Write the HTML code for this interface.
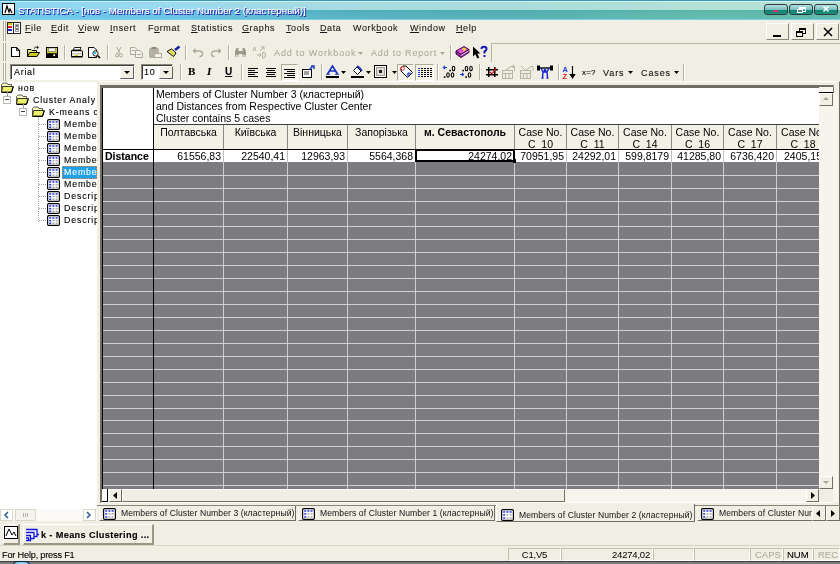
<!DOCTYPE html><html><head><meta charset="utf-8"><style>
html,body{margin:0;padding:0;width:840px;height:564px;overflow:hidden;background:#f1efe4;position:relative}
body{will-change:transform}
.a{position:absolute}
.t{position:absolute;font-family:"Liberation Sans",sans-serif;white-space:nowrap;line-height:13px;-webkit-font-smoothing:antialiased}
.m{-webkit-text-stroke:0.1px currentColor}
svg{overflow:visible}
</style></head><body>
<div class="a" style="left:0px;top:0px;width:840px;height:20px;background:linear-gradient(90deg,#6ac8ec 0%,#62c0e4 22%,#50b0c0 40%,#4eacb0 60%,#5cb8a8 85%,#58b4a8 100%)"></div>
<div class="a" style="left:0px;top:1px;width:840px;height:9px;background:linear-gradient(90deg,rgba(200,240,255,0.35) 0%,rgba(225,248,248,0.6) 40%,rgba(230,250,240,0.65) 100%)"></div>
<div class="a" style="left:0px;top:10px;width:840px;height:9px;background:linear-gradient(180deg,rgba(255,255,255,0.0),rgba(255,255,255,0.08))"></div>
<div class="a" style="left:0px;top:0px;width:840px;height:1px;background:#3a98b8"></div>
<div class="a" style="left:0px;top:1px;width:840px;height:1px;background:rgba(255,255,255,0.5)"></div>
<div class="a" style="left:0px;top:19px;width:840px;height:1px;background:#7ccfe8"></div>
<div class="a" style="left:2px;top:3px;width:13px;height:12px;background:#fff;border:1px solid #000;box-sizing:border-box"></div>
<svg class="a" style="left:2px;top:3px;" width="13" height="12" viewBox="0 0 13 12"><path d="M3 10 L5 3 L7 9 L8 6 L10 10" stroke="#000" stroke-width="1.2" fill="none"/></svg>
<div class="t m" style="left:18px;top:4px;font-size:9.8px;font-weight:400;color:#ffffff;text-shadow:1px 1px 0 #2020a8,0.5px 0.5px 0 #4040c0">STATISTICA - [нов - Members of Cluster Number 2 (кластерный)]</div>
<div class="a" style="left:764px;top:4px;width:24px;height:11px;border:1px solid #303c3c;border-radius:3px;box-sizing:border-box;background:linear-gradient(180deg,#b8e0e0 0%,#78c0c0 50%,#108070 55%,#209080 100%)"></div>
<div class="a" style="left:789px;top:4px;width:24px;height:11px;border:1px solid #303c3c;border-radius:3px;box-sizing:border-box;background:linear-gradient(180deg,#b8e0e0 0%,#78c0c0 50%,#108070 55%,#209080 100%)"></div>
<div class="a" style="left:814px;top:4px;width:24px;height:11px;border:1px solid #303c3c;border-radius:3px;box-sizing:border-box;background:linear-gradient(180deg,#b8e0e0 0%,#78c0c0 50%,#108070 55%,#209080 100%)"></div>
<div class="a" style="left:773px;top:10px;width:5px;height:2px;background:#e03060"></div>
<div class="a" style="left:799px;top:7px;width:7px;height:5px;border:1px solid #fff;border-top-width:2px;box-sizing:border-box"></div>
<div class="a" style="left:797px;top:9px;width:6px;height:4px;border:1px solid #fff;box-sizing:border-box;background:#508080"></div>
<svg class="a" style="left:823px;top:6px;" width="6" height="6" viewBox="0 0 6 6"><path d="M0.5 0.5 L5.5 5.5 M5.5 0.5 L0.5 5.5" stroke="#fff" stroke-width="1.6"/></svg>
<div class="a" style="left:0px;top:20px;width:840px;height:63px;background:#f1efe4"></div>
<div class="a" style="left:3px;top:21px;width:1px;height:20px;background:#b0ac98"></div>
<div class="a" style="left:5px;top:21px;width:1px;height:20px;background:#b0ac98"></div>
<div class="a" style="left:4px;top:21px;width:1px;height:20px;background:#fff"></div>
<div class="a" style="left:3px;top:43px;width:1px;height:18px;background:#b0ac98"></div>
<div class="a" style="left:5px;top:43px;width:1px;height:18px;background:#b0ac98"></div>
<div class="a" style="left:4px;top:43px;width:1px;height:18px;background:#fff"></div>
<div class="a" style="left:3px;top:63px;width:1px;height:18px;background:#b0ac98"></div>
<div class="a" style="left:5px;top:63px;width:1px;height:18px;background:#b0ac98"></div>
<div class="a" style="left:4px;top:63px;width:1px;height:18px;background:#fff"></div>
<div class="a" style="left:7px;top:22px;width:14px;height:12px;background:#fff;border:1px solid #222;box-sizing:border-box"></div>
<div class="a" style="left:8px;top:23px;width:4px;height:2px;background:#d0c000"></div>
<div class="a" style="left:8px;top:26px;width:4px;height:2px;background:#e02020"></div>
<div class="a" style="left:8px;top:29px;width:4px;height:2px;background:#2030d0"></div>
<div class="a" style="left:13px;top:22px;width:1px;height:12px;background:#222"></div>
<div class="a" style="left:15px;top:24px;width:4px;height:8px;border:1px solid #a0a0a0;box-sizing:border-box"></div>
<div class="a" style="left:16px;top:25px;width:2px;height:2px;background:#707070"></div>
<div class="a" style="left:16px;top:28px;width:2px;height:2px;background:#707070"></div>
<div class="t m" style="left:25px;top:22px;font-size:9px;font-weight:400;color:#1a1a1a;letter-spacing:0.6px"><u>F</u>ile</div>
<div class="t m" style="left:51px;top:22px;font-size:9px;font-weight:400;color:#1a1a1a;letter-spacing:0.6px"><u>E</u>dit</div>
<div class="t m" style="left:78px;top:22px;font-size:9px;font-weight:400;color:#1a1a1a;letter-spacing:0.6px"><u>V</u>iew</div>
<div class="t m" style="left:110px;top:22px;font-size:9px;font-weight:400;color:#1a1a1a;letter-spacing:0.6px"><u>I</u>nsert</div>
<div class="t m" style="left:148px;top:22px;font-size:9px;font-weight:400;color:#1a1a1a;letter-spacing:0.6px">F<u>o</u>rmat</div>
<div class="t m" style="left:191px;top:22px;font-size:9px;font-weight:400;color:#1a1a1a;letter-spacing:0.6px"><u>S</u>tatistics</div>
<div class="t m" style="left:242px;top:22px;font-size:9px;font-weight:400;color:#1a1a1a;letter-spacing:0.6px"><u>G</u>raphs</div>
<div class="t m" style="left:286px;top:22px;font-size:9px;font-weight:400;color:#1a1a1a;letter-spacing:0.6px"><u>T</u>ools</div>
<div class="t m" style="left:320px;top:22px;font-size:9px;font-weight:400;color:#1a1a1a;letter-spacing:0.6px"><u>D</u>ata</div>
<div class="t m" style="left:353px;top:22px;font-size:9px;font-weight:400;color:#1a1a1a;letter-spacing:0.6px">Work<u>b</u>ook</div>
<div class="t m" style="left:410px;top:22px;font-size:9px;font-weight:400;color:#1a1a1a;letter-spacing:0.6px"><u>W</u>indow</div>
<div class="t m" style="left:456px;top:22px;font-size:9px;font-weight:400;color:#1a1a1a;letter-spacing:0.6px"><u>H</u>elp</div>
<div class="a" style="left:766px;top:23px;width:23px;height:17px;background:#f1efe4;border-right:1px solid #8a8678;border-bottom:1px solid #8a8678;border-left:1px solid #fff;border-top:1px solid #fff;box-sizing:border-box"></div>
<div class="a" style="left:791px;top:23px;width:23px;height:17px;background:#f1efe4;border-right:1px solid #8a8678;border-bottom:1px solid #8a8678;border-left:1px solid #fff;border-top:1px solid #fff;box-sizing:border-box"></div>
<div class="a" style="left:816px;top:23px;width:23px;height:17px;background:#f1efe4;border-right:1px solid #8a8678;border-bottom:1px solid #8a8678;border-left:1px solid #fff;border-top:1px solid #fff;box-sizing:border-box"></div>
<div class="a" style="left:773px;top:35px;width:8px;height:2px;background:#000"></div>
<div class="a" style="left:799px;top:28px;width:7px;height:6px;border:1px solid #000;border-top-width:2px;box-sizing:border-box;background:#f1efe4"></div>
<div class="a" style="left:796px;top:31px;width:7px;height:6px;border:1px solid #000;border-top-width:2px;box-sizing:border-box;background:#f1efe4"></div>
<svg class="a" style="left:823px;top:27px;" width="10" height="10" viewBox="0 0 10 10"><path d="M1 1 L9 9 M9 1 L1 9" stroke="#000" stroke-width="1.5"/></svg>
<div class="a" style="left:491px;top:43px;width:349px;height:19px;border-left:1px solid #b8b4a0;border-top:1px solid #b8b4a0;box-sizing:border-box"></div>
<svg class="a" style="left:10px;top:47px;" width="11" height="11" viewBox="0 0 11 11"><path d="M1.5 0.5 H6.5 L9.5 3.5 V9.5 H1.5 Z" fill="#fff" stroke="#000" stroke-width="1.1"/><path d="M6.5 0.5 V3.5 H9.5" fill="none" stroke="#000" stroke-width="0.8"/></svg>
<svg class="a" style="left:26px;top:46px;" width="15" height="12" viewBox="0 0 15 12"><path d="M1.5 3.5 H5 L6 4.5 H10.5 V10.5 H1.5 Z" fill="#e8e880" stroke="#000" stroke-width="1"/><path d="M3.5 6.5 H13.5 L11 10.5 H1.5 Z" fill="#c8c820" stroke="#000" stroke-width="1"/><path d="M8 2.5 Q9.5 0.5 11.5 1" stroke="#000" fill="none" stroke-width="0.9"/><path d="M11 0 L13 1.5 L11 3 Z" fill="#000"/></svg>
<svg class="a" style="left:46px;top:47px;" width="12" height="11" viewBox="0 0 12 11"><rect x="0.5" y="0.5" width="11" height="10" fill="#d0cc30" stroke="#000" stroke-width="1"/><rect x="2.5" y="1" width="7" height="3.5" fill="#fff" stroke="#404040" stroke-width="0.5"/><rect x="1" y="6.2" width="10" height="4" fill="#000"/><rect x="7.3" y="7.3" width="1.8" height="1.8" fill="#fff"/></svg>
<div class="a" style="left:64px;top:45px;width:1px;height:15px;background:#b8b4a0"></div>
<div class="a" style="left:65px;top:45px;width:1px;height:15px;background:#fff"></div>
<svg class="a" style="left:70px;top:47px;" width="14" height="11" viewBox="0 0 14 11"><path d="M4.5 0.5 H11 L10 3 H3 Z" fill="#fff" stroke="#000" stroke-width="0.9"/><path d="M1.5 3.5 H11.5 Q12.5 3.5 12.5 5 V9.5 H1.5 Z" fill="#c8c4b8" stroke="#000" stroke-width="1"/><rect x="2" y="5" width="10" height="1" fill="#fff"/><rect x="2" y="7.5" width="10" height="1.2" fill="#fff"/><rect x="5" y="8" width="3" height="1" fill="#e0d000"/><path d="M1 10 H12.5" stroke="#000"/></svg>
<svg class="a" style="left:88px;top:47px;" width="13" height="12" viewBox="0 0 13 12"><path d="M0.5 0.5 H6 L8.5 3 V10.5 H0.5 Z" fill="#fff" stroke="#000" stroke-width="1"/><circle cx="7.5" cy="6.5" r="2.6" fill="#fff" stroke="#202020" stroke-width="1"/><circle cx="7" cy="6" r="1.2" fill="#20c8e8"/><path d="M9.5 8.5 L12 11" stroke="#000" stroke-width="1.6"/></svg>
<div class="a" style="left:107px;top:45px;width:1px;height:15px;background:#b8b4a0"></div>
<div class="a" style="left:108px;top:45px;width:1px;height:15px;background:#fff"></div>
<svg class="a" style="left:115px;top:47px;" width="8" height="11" viewBox="0 0 8 11"><path d="M1.5 0 L5 6.5 M6 0 L2.5 6.5" stroke="#aca899" stroke-width="1"/><circle cx="2" cy="8.3" r="1.6" fill="none" stroke="#aca899"/><circle cx="5.8" cy="8.3" r="1.6" fill="none" stroke="#aca899"/></svg>
<svg class="a" style="left:130px;top:47px;" width="14" height="11" viewBox="0 0 14 11"><path d="M0.5 0.5 H5 L7 2.5 V7.5 H0.5 Z" fill="#f4f2ea" stroke="#aca899"/><rect x="2" y="3" width="3" height="1" fill="#aca899"/><path d="M5.5 3.5 H10 L12.5 6 V10.5 H5.5 Z" fill="#f4f2ea" stroke="#aca899"/><rect x="7" y="7" width="4" height="1" fill="#aca899"/></svg>
<svg class="a" style="left:148px;top:47px;" width="15" height="11" viewBox="0 0 15 11"><rect x="1" y="1" width="10" height="10" rx="1.5" fill="#b4b0a2"/><rect x="3.5" y="0" width="5" height="2" fill="#8c887a"/><rect x="6.5" y="6.5" width="7" height="4" fill="#f4f2ea" stroke="#aca899"/></svg>
<svg class="a" style="left:166px;top:46px;" width="15" height="13" viewBox="0 0 15 13"><path d="M9 4 L13.5 0.5" stroke="#1828a0" stroke-width="2.6"/><path d="M1 5.5 L5.5 3 L10 7 L7.5 10.5 Z" fill="#f0f0a0" stroke="#000" stroke-width="1"/><path d="M4 5 L8 8.5" stroke="#d8d820" stroke-width="1.6"/><path d="M3 12 H4 M5 12 H6 M7 12 H8" stroke="#d8e020"/></svg>
<div class="a" style="left:185px;top:45px;width:1px;height:15px;background:#b8b4a0"></div>
<div class="a" style="left:186px;top:45px;width:1px;height:15px;background:#fff"></div>
<svg class="a" style="left:192px;top:48px;" width="12" height="9" viewBox="0 0 12 9"><path d="M2 3 H7 Q10.5 3 10.5 6 Q10.5 8.5 7.5 8.5" stroke="#aca899" fill="none" stroke-width="1.3"/><path d="M0.5 3 L3.5 0 V6 Z" fill="#aca899"/></svg>
<svg class="a" style="left:210px;top:48px;" width="12" height="9" viewBox="0 0 12 9"><path d="M10 3 H5 Q1.5 3 1.5 6 Q1.5 8.5 4.5 8.5" stroke="#aca899" fill="none" stroke-width="1.3"/><path d="M11.5 3 L8.5 0 V6 Z" fill="#aca899"/></svg>
<div class="a" style="left:228px;top:45px;width:1px;height:15px;background:#b8b4a0"></div>
<div class="a" style="left:229px;top:45px;width:1px;height:15px;background:#fff"></div>
<svg class="a" style="left:234px;top:47px;" width="13" height="11" viewBox="0 0 13 11"><path d="M1 10 V4 L2.5 1 H4.5 V10 Z M12 10 V4 L10.5 1 H8.5 V10 Z" fill="#9c988a"/><rect x="4" y="4" width="5" height="3" fill="#9c988a"/><rect x="1.5" y="8" width="2.5" height="2" fill="#d8d4c8"/><rect x="9" y="8" width="2.5" height="2" fill="#d8d4c8"/></svg>
<svg class="a" style="left:252px;top:46px;" width="14" height="13" viewBox="0 0 14 13"><path d="M1 5 L2.5 1 L4 5 M9 1 L12 1 V4 M12 1 L8 5 M5 9 H9 M7.5 7.5 L9 9 L7.5 10.5" stroke="#aca899" fill="none" stroke-width="0.9"/><path d="M10.5 6.5 H12 Q13.5 6.5 13.5 8 Q13.5 12 12 12 H10.5 Z" fill="none" stroke="#aca899" stroke-width="0.9"/></svg>
<div class="t m" style="left:274px;top:47px;font-size:9px;font-weight:400;color:#b0ac9c;letter-spacing:0.9px">Add to Workbook</div>
<svg class="a" style="left:358px;top:52px;" width="5" height="3" viewBox="0 0 5 3"><path d="M0 0 H5 L2.5 3 Z" fill="#aca899"/></svg>
<div class="t m" style="left:371px;top:47px;font-size:9px;font-weight:400;color:#b0ac9c;letter-spacing:0.8px">Add to Report</div>
<svg class="a" style="left:440px;top:52px;" width="5" height="3" viewBox="0 0 5 3"><path d="M0 0 H5 L2.5 3 Z" fill="#aca899"/></svg>
<div class="a" style="left:450px;top:45px;width:1px;height:15px;background:#b8b4a0"></div>
<div class="a" style="left:451px;top:45px;width:1px;height:15px;background:#fff"></div>
<svg class="a" style="left:455px;top:45px;" width="15" height="14" viewBox="0 0 15 14"><path d="M1 6 L9 1.5 L14 4.5 L6 9.5 Z" fill="#e050e0" stroke="#300030" stroke-width="0.9"/><path d="M1 6 V9 L6 12.5 L14 7.5 V4.5 L6 9.5 Z" fill="#a020b0" stroke="#300030" stroke-width="0.9"/><path d="M6 10.5 L13.5 6" stroke="#fff" stroke-width="0.8"/><path d="M7.5 4.5 Q8.5 3 10 3.8 Q10.5 4.5 9 5.5 L8.5 6.3" stroke="#f0f000" stroke-width="1.2" fill="none"/></svg>
<svg class="a" style="left:472px;top:46px;" width="17" height="13" viewBox="0 0 17 13"><path d="M1 0.5 V10.5 L3.3 8.3 L5.3 12.5 L7.3 11.5 L5.3 7.5 H8.5 Z" fill="#000"/><path d="M9.5 3 Q9.5 0.8 12 0.8 Q14.5 0.8 14.5 3 Q14.5 4.5 12.5 5.5 V7.5" stroke="#1818b0" stroke-width="2" fill="none"/><rect x="11.5" y="9" width="2" height="2" fill="#1818b0"/></svg>
<div class="a" style="left:10px;top:64px;width:125px;height:16px;background:#fff;border-top:1px solid #8a8678;border-left:1px solid #8a8678;border-bottom:1px solid #fff;border-right:1px solid #fff;box-sizing:border-box"></div>
<div class="a" style="left:11px;top:65px;width:1px;height:14px;background:#404040"></div>
<div class="a" style="left:11px;top:65px;width:123px;height:1px;background:#404040"></div>
<div class="t m" style="left:14px;top:66px;font-size:9px;font-weight:400;color:#000;letter-spacing:0.7px">Arial</div>
<div class="a" style="left:120px;top:66px;width:14px;height:13px;background:#f1efe4;border-right:1px solid #606060;border-bottom:1px solid #606060;border-left:1px solid #fff;border-top:1px solid #fff;box-sizing:border-box"></div>
<svg class="a" style="left:124px;top:71px;" width="6" height="3" viewBox="0 0 6 3"><path d="M0 0 H6 L3 3 Z" fill="#000"/></svg>
<div class="a" style="left:141px;top:64px;width:32px;height:16px;background:#fff;border-top:1px solid #8a8678;border-left:1px solid #8a8678;border-bottom:1px solid #fff;border-right:1px solid #fff;box-sizing:border-box"></div>
<div class="a" style="left:142px;top:65px;width:1px;height:14px;background:#404040"></div>
<div class="a" style="left:142px;top:65px;width:30px;height:1px;background:#404040"></div>
<div class="t m" style="left:144px;top:66px;font-size:9px;font-weight:400;color:#000;letter-spacing:0.7px">10</div>
<div class="a" style="left:159px;top:66px;width:14px;height:13px;background:#f1efe4;border-right:1px solid #606060;border-bottom:1px solid #606060;border-left:1px solid #fff;border-top:1px solid #fff;box-sizing:border-box"></div>
<svg class="a" style="left:163px;top:71px;" width="6" height="3" viewBox="0 0 6 3"><path d="M0 0 H6 L3 3 Z" fill="#000"/></svg>
<div class="a" style="left:180px;top:64px;width:1px;height:16px;background:#b8b4a0"></div>
<div class="a" style="left:181px;top:64px;width:1px;height:16px;background:#fff"></div>
<div class="t m" style="left:188px;top:65px;font-size:11px;font-weight:700;color:#000;font-family:'Liberation Serif'">B</div>
<div class="t m" style="left:207px;top:65px;font-size:11px;font-weight:700;color:#000;font-family:'Liberation Serif';font-style:italic">I</div>
<div class="t m" style="left:225px;top:65px;font-size:10px;font-weight:700;color:#000;"><u>U</u></div>
<div class="a" style="left:241px;top:64px;width:1px;height:16px;background:#b8b4a0"></div>
<div class="a" style="left:242px;top:64px;width:1px;height:16px;background:#fff"></div>
<div class="a" style="left:248px;top:68px;width:10px;height:1px;background:#000"></div>
<div class="a" style="left:248px;top:70px;width:7px;height:1px;background:#000"></div>
<div class="a" style="left:248px;top:72px;width:10px;height:1px;background:#000"></div>
<div class="a" style="left:248px;top:74px;width:7px;height:1px;background:#000"></div>
<div class="a" style="left:248px;top:76px;width:10px;height:1px;background:#000"></div>
<div class="a" style="left:266px;top:68px;width:10px;height:1px;background:#000"></div>
<div class="a" style="left:267px;top:70px;width:8px;height:1px;background:#000"></div>
<div class="a" style="left:266px;top:72px;width:10px;height:1px;background:#000"></div>
<div class="a" style="left:267px;top:74px;width:8px;height:1px;background:#000"></div>
<div class="a" style="left:266px;top:76px;width:10px;height:1px;background:#000"></div>
<div class="a" style="left:281px;top:64px;width:17px;height:17px;background:#f4f2e8;border-left:1px solid #b0ac98;border-top:1px solid #b0ac98;border-right:1px solid #fff;border-bottom:1px solid #fff;box-sizing:border-box"></div>
<div class="a" style="left:284px;top:69px;width:11px;height:1px;background:#000"></div>
<div class="a" style="left:287px;top:71px;width:8px;height:1px;background:#000"></div>
<div class="a" style="left:284px;top:73px;width:11px;height:1px;background:#000"></div>
<div class="a" style="left:287px;top:75px;width:8px;height:1px;background:#000"></div>
<div class="a" style="left:284px;top:77px;width:11px;height:1px;background:#000"></div>
<svg class="a" style="left:301px;top:65px;" width="14" height="14" viewBox="0 0 14 14"><rect x="1.5" y="4.5" width="9" height="8" fill="#fff" stroke="#000"/><rect x="3" y="6" width="5" height="4" fill="#a0a0a0"/><path d="M8 5 L12 1 M10 1 H13 V4" stroke="#2040c0" stroke-width="1.5" fill="none"/></svg>
<div class="a" style="left:321px;top:64px;width:1px;height:16px;background:#b8b4a0"></div>
<div class="a" style="left:322px;top:64px;width:1px;height:16px;background:#fff"></div>
<svg class="a" style="left:326px;top:65px;" width="13" height="14" viewBox="0 0 13 14"><path d="M1.5 9 L6.5 1 L11.5 9 M4 6 H9" stroke="#1030c0" stroke-width="1.6" fill="none"/><path d="M0 9.2 H4 M9 9.2 H13" stroke="#1030c0" stroke-width="1"/><rect x="0" y="11" width="13" height="2" fill="#000"/></svg>
<svg class="a" style="left:341px;top:71px;" width="5" height="3" viewBox="0 0 5 3"><path d="M0 0 H5 L2.5 3 Z" fill="#000"/></svg>
<svg class="a" style="left:351px;top:65px;" width="13" height="14" viewBox="0 0 13 14"><path d="M2.5 5.5 L6 2 L10 6 L6.5 9.5 Z" fill="#fff" stroke="#000" stroke-width="1"/><path d="M6 1 L9 3 L11 6" stroke="#1030c0" stroke-width="1.6" fill="none"/><rect x="0" y="11" width="13" height="2" fill="#000"/></svg>
<svg class="a" style="left:366px;top:71px;" width="5" height="3" viewBox="0 0 5 3"><path d="M0 0 H5 L2.5 3 Z" fill="#000"/></svg>
<svg class="a" style="left:374px;top:65px;" width="13" height="13" viewBox="0 0 13 13"><rect x="0.5" y="0.5" width="12" height="12" fill="#fff" stroke="#000"/><rect x="2.5" y="2.5" width="8" height="8" fill="#dcdad0" stroke="#a0a098" stroke-width="1"/><rect x="5" y="5" width="3" height="3" fill="#202020"/></svg>
<svg class="a" style="left:392px;top:71px;" width="5" height="3" viewBox="0 0 5 3"><path d="M0 0 H5 L2.5 3 Z" fill="#000"/></svg>
<div class="a" style="left:397px;top:64px;width:17px;height:17px;background:#f4f2e8;border-left:1px solid #b0ac98;border-top:1px solid #b0ac98;border-right:1px solid #fff;border-bottom:1px solid #fff;box-sizing:border-box"></div>
<svg class="a" style="left:399px;top:65px;" width="15" height="14" viewBox="0 0 15 14"><path d="M1.5 3.5 L4 1 H7 L13.5 7.5 L8.5 12.5 L2 6 V3.5 Z" fill="#fff" stroke="#000" stroke-width="1"/><path d="M9.5 7 L12.5 8 L8.5 12 L7.5 9 Z" fill="#5070e0"/><circle cx="3.5" cy="3.5" r="1.8" fill="none" stroke="#e02020" stroke-width="1"/></svg>
<div class="a" style="left:415px;top:64px;width:19px;height:17px;background:#f4f2e8;border-left:1px solid #b0ac98;border-top:1px solid #b0ac98;border-right:1px solid #fff;border-bottom:1px solid #fff;box-sizing:border-box"></div>
<svg class="a" style="left:418px;top:67px;" width="14" height="12" viewBox="0 0 14 12"><rect x="0" y="1" width="2" height="1" fill="#2040e0"/><rect x="3" y="1" width="2" height="1" fill="#000"/><rect x="6" y="1" width="2" height="1" fill="#000"/><rect x="9" y="1" width="2" height="1" fill="#000"/><rect x="12" y="1" width="2" height="1" fill="#000"/><rect x="0" y="3" width="2" height="1" fill="#2040e0"/><rect x="3" y="3" width="2" height="1" fill="#000"/><rect x="6" y="3" width="2" height="1" fill="#000"/><rect x="9" y="3" width="2" height="1" fill="#000"/><rect x="12" y="3" width="2" height="1" fill="#000"/><rect x="0" y="5" width="2" height="1" fill="#2040e0"/><rect x="3" y="5" width="2" height="1" fill="#000"/><rect x="6" y="5" width="2" height="1" fill="#000"/><rect x="9" y="5" width="2" height="1" fill="#000"/><rect x="12" y="5" width="2" height="1" fill="#000"/><rect x="0" y="7" width="2" height="1" fill="#2040e0"/><rect x="3" y="7" width="2" height="1" fill="#000"/><rect x="6" y="7" width="2" height="1" fill="#000"/><rect x="9" y="7" width="2" height="1" fill="#000"/><rect x="12" y="7" width="2" height="1" fill="#000"/><rect x="0" y="9" width="2" height="1" fill="#2040e0"/><rect x="3" y="9" width="2" height="1" fill="#000"/><rect x="6" y="9" width="2" height="1" fill="#000"/><rect x="9" y="9" width="2" height="1" fill="#000"/><rect x="12" y="9" width="2" height="1" fill="#000"/></svg>
<div class="a" style="left:437px;top:64px;width:1px;height:16px;background:#b8b4a0"></div>
<div class="a" style="left:438px;top:64px;width:1px;height:16px;background:#fff"></div>
<svg class="a" style="left:443px;top:65px;" width="14" height="14" viewBox="0 0 14 14"><path d="M0.5 2.5 H4 M2 1 L0.5 2.5 L2 4" stroke="#2040d0" stroke-width="1.2" fill="none"/><rect x="6.3" y="4.8" width="1.6" height="1.6" fill="#000"/><ellipse cx="10.5" cy="3.5" rx="1.3" ry="2.2" fill="none" stroke="#000" stroke-width="1.1"/><rect x="0.8" y="11.3" width="1.6" height="1.6" fill="#000"/><ellipse cx="5" cy="10" rx="1.3" ry="2.2" fill="none" stroke="#000" stroke-width="1.1"/><ellipse cx="9.5" cy="10" rx="1.3" ry="2.2" fill="none" stroke="#000" stroke-width="1.1"/></svg>
<svg class="a" style="left:460px;top:65px;" width="14" height="14" viewBox="0 0 14 14"><rect x="2.3" y="4.8" width="1.6" height="1.6" fill="#000"/><ellipse cx="6.5" cy="3.5" rx="1.3" ry="2.2" fill="none" stroke="#000" stroke-width="1.1"/><ellipse cx="11" cy="3.5" rx="1.3" ry="2.2" fill="none" stroke="#000" stroke-width="1.1"/><path d="M0 9.5 H3.5 M2 8 L3.5 9.5 L2 11" stroke="#2040d0" stroke-width="1.2" fill="none"/><rect x="5.3" y="11.3" width="1.6" height="1.6" fill="#000"/><ellipse cx="9.5" cy="10" rx="1.3" ry="2.2" fill="none" stroke="#000" stroke-width="1.1"/></svg>
<div class="a" style="left:479px;top:64px;width:1px;height:16px;background:#b8b4a0"></div>
<div class="a" style="left:480px;top:64px;width:1px;height:16px;background:#fff"></div>
<svg class="a" style="left:486px;top:67px;" width="12" height="10" viewBox="0 0 12 10"><rect x="0" y="2" width="12" height="1.5" fill="#000"/><rect x="0" y="7" width="12" height="1.5" fill="#000"/><rect x="2" y="0" width="1.5" height="10" fill="#000"/><rect x="8" y="0" width="1.5" height="10" fill="#000"/><path d="M4 5 L6 7 L10 1" stroke="#e02020" fill="none" stroke-width="1.3"/></svg>
<svg class="a" style="left:502px;top:65px;" width="15" height="14" viewBox="0 0 15 14"><rect x="0.5" y="5.5" width="10" height="8" fill="none" stroke="#b8b4a4"/><path d="M0.5 8.5 H10.5 M3.5 8.5 V13.5 M7 8.5 V13.5" stroke="#b8b4a4"/><path d="M4 5 L9 1.5 H12 M10.5 0 L12.5 1.5 L10.5 3 M12.5 1.5 V6" stroke="#b8b4a4" fill="none"/></svg>
<svg class="a" style="left:520px;top:65px;" width="15" height="14" viewBox="0 0 15 14"><rect x="0.5" y="5.5" width="10" height="8" fill="none" stroke="#b8b4a4"/><path d="M0.5 8.5 H10.5 M3.5 8.5 V13.5 M7 8.5 V13.5" stroke="#b8b4a4"/><path d="M1 1 L4.5 4.5 M6 5 L11 1.5 H13 V6" stroke="#b8b4a4" fill="none"/></svg>
<svg class="a" style="left:537px;top:65px;" width="16" height="14" viewBox="0 0 16 14"><rect x="0" y="0.5" width="3" height="5" fill="#000"/><rect x="13" y="0.5" width="3" height="5" fill="#000"/><rect x="2" y="2.3" width="12" height="1.4" fill="#000"/><circle cx="8" cy="5.5" r="1.4" fill="#1020d0"/><path d="M4 3 L6 7 M12 3 L10 7 M6 7 H10 L10.5 13 M6 7 L5.5 13 M4.5 13 H6.5 M9.5 13 H11.5" stroke="#1020d0" stroke-width="1.4" fill="none"/></svg>
<div class="a" style="left:558px;top:64px;width:1px;height:16px;background:#b8b4a0"></div>
<div class="a" style="left:559px;top:64px;width:1px;height:16px;background:#fff"></div>
<svg class="a" style="left:562px;top:65px;" width="15" height="15" viewBox="0 0 15 15"><text x="0.5" y="6.5" font-size="7.5" font-weight="700" fill="#2040d0" font-family="Liberation Sans">A</text><text x="0.5" y="13.5" font-size="7.5" font-weight="700" fill="#e02020" font-family="Liberation Sans">Z</text><path d="M10.5 1 V12 M8.3 9.5 L10.5 13 L12.7 9.5 Z" stroke="#000" fill="#000" stroke-width="1.1"/></svg>
<div class="t m" style="left:582px;top:66px;font-size:8px;font-weight:400;color:#000;letter-spacing:0.2px">x=?</div>
<div class="t m" style="left:603px;top:67px;font-size:9px;font-weight:400;color:#111;letter-spacing:0.9px">Vars</div>
<svg class="a" style="left:628px;top:71px;" width="5" height="3" viewBox="0 0 5 3"><path d="M0 0 H5 L2.5 3 Z" fill="#000"/></svg>
<div class="t m" style="left:641px;top:67px;font-size:9px;font-weight:400;color:#111;letter-spacing:0.9px">Cases</div>
<svg class="a" style="left:674px;top:71px;" width="5" height="3" viewBox="0 0 5 3"><path d="M0 0 H5 L2.5 3 Z" fill="#000"/></svg>
<div class="a" style="left:683px;top:64px;width:1px;height:18px;background:#b8b4a0"></div>
<div class="a" style="left:684px;top:64px;width:1px;height:18px;background:#fff"></div>
<div class="a" style="left:0px;top:82px;width:840px;height:482px;background:#f1efe4"></div>
<div class="a" style="left:0px;top:82px;width:97px;height:439px;background:#fff"></div>
<svg class="a" style="left:0px;top:82px;" width="14" height="11" viewBox="0 0 14 11"><path d="M1.5 2.5 Q2 1 4 1 H7 L8 2.5 H11.5 V9.5 H1.5 Z" fill="#f8f8c0" stroke="#505048" stroke-width="0.9"/><path d="M2.5 4.5 H13 L11.5 10 H1.5 Z" fill="#e8ec50" stroke="#202020" stroke-width="0.9"/><path d="M4 6 H11 M3.5 8 H10.5" stroke="#f8f8a0" stroke-width="0.8"/><path d="M1.5 10.5 H11.5 L13.5 4.5" stroke="#000" stroke-width="1" fill="none"/></svg>
<div class="t m" style="left:18px;top:82px;font-size:8.8px;font-weight:400;color:#000;letter-spacing:0.9px;-webkit-text-stroke:0.12px #000">нов</div>
<div class="a" style="left:3px;top:96px;width:8px;height:8px;border:1px solid #b8b8b0;background:#fff;box-sizing:border-box"></div>
<div class="a" style="left:5px;top:99px;width:4px;height:1px;background:#404040"></div>
<svg class="a" style="left:15px;top:94px;" width="14" height="11" viewBox="0 0 14 11"><path d="M1.5 2.5 Q2 1 4 1 H7 L8 2.5 H11.5 V9.5 H1.5 Z" fill="#f8f8c0" stroke="#505048" stroke-width="0.9"/><path d="M2.5 4.5 H13 L11.5 10 H1.5 Z" fill="#e8ec50" stroke="#202020" stroke-width="0.9"/><path d="M4 6 H11 M3.5 8 H10.5" stroke="#f8f8a0" stroke-width="0.8"/><path d="M1.5 10.5 H11.5 L13.5 4.5" stroke="#000" stroke-width="1" fill="none"/></svg>
<div class="t m" style="left:33px;top:94px;font-size:8.8px;font-weight:400;color:#000;letter-spacing:0.85px;-webkit-text-stroke:0.12px #000">Cluster Analy</div>
<div class="a" style="left:19px;top:108px;width:8px;height:8px;border:1px solid #b8b8b0;background:#fff;box-sizing:border-box"></div>
<div class="a" style="left:21px;top:111px;width:4px;height:1px;background:#404040"></div>
<svg class="a" style="left:31px;top:106px;" width="14" height="11" viewBox="0 0 14 11"><path d="M1.5 2.5 Q2 1 4 1 H7 L8 2.5 H11.5 V9.5 H1.5 Z" fill="#f8f8c0" stroke="#505048" stroke-width="0.9"/><path d="M2.5 4.5 H13 L11.5 10 H1.5 Z" fill="#e8ec50" stroke="#202020" stroke-width="0.9"/><path d="M4 6 H11 M3.5 8 H10.5" stroke="#f8f8a0" stroke-width="0.8"/><path d="M1.5 10.5 H11.5 L13.5 4.5" stroke="#000" stroke-width="1" fill="none"/></svg>
<div class="t m" style="left:49px;top:106px;font-size:8.8px;font-weight:400;color:#000;letter-spacing:0.85px;-webkit-text-stroke:0.12px #000">K-means c</div>
<svg class="a" style="left:47px;top:119px;" width="13" height="11" viewBox="0 0 13 11"><rect x="0.6" y="0.6" width="11.8" height="9.8" rx="1.2" fill="#fff" stroke="#000" stroke-width="1.2"/><rect x="2.2" y="2.2" width="2" height="1.5" fill="#2030e0"/><rect x="5.4" y="2.2" width="2" height="1.5" fill="#2030e0"/><rect x="8.6" y="2.2" width="2" height="1.5" fill="#2030e0"/><rect x="2.2" y="4.9" width="2" height="1.5" fill="#2030e0"/><rect x="5.4" y="4.9" width="2" height="1.5" fill="#a8a8a8"/><rect x="8.6" y="4.9" width="2" height="1.5" fill="#a8a8a8"/><rect x="2.2" y="7.5" width="2" height="1.5" fill="#2030e0"/><rect x="5.4" y="7.5" width="2" height="1.5" fill="#a8a8a8"/><rect x="8.6" y="7.5" width="2" height="1.5" fill="#a8a8a8"/></svg>
<div class="t m" style="left:64px;top:118px;font-size:8.8px;font-weight:400;color:#000;letter-spacing:0.85px;-webkit-text-stroke:0.12px #000">Membe</div>
<div class="a" style="left:39px;top:124px;width:8px;height:1px;background:repeating-linear-gradient(90deg,#a0a0a0 0 1px,transparent 1px 2px)"></div>
<svg class="a" style="left:47px;top:131px;" width="13" height="11" viewBox="0 0 13 11"><rect x="0.6" y="0.6" width="11.8" height="9.8" rx="1.2" fill="#fff" stroke="#000" stroke-width="1.2"/><rect x="2.2" y="2.2" width="2" height="1.5" fill="#2030e0"/><rect x="5.4" y="2.2" width="2" height="1.5" fill="#2030e0"/><rect x="8.6" y="2.2" width="2" height="1.5" fill="#2030e0"/><rect x="2.2" y="4.9" width="2" height="1.5" fill="#2030e0"/><rect x="5.4" y="4.9" width="2" height="1.5" fill="#a8a8a8"/><rect x="8.6" y="4.9" width="2" height="1.5" fill="#a8a8a8"/><rect x="2.2" y="7.5" width="2" height="1.5" fill="#2030e0"/><rect x="5.4" y="7.5" width="2" height="1.5" fill="#a8a8a8"/><rect x="8.6" y="7.5" width="2" height="1.5" fill="#a8a8a8"/></svg>
<div class="t m" style="left:64px;top:130px;font-size:8.8px;font-weight:400;color:#000;letter-spacing:0.85px;-webkit-text-stroke:0.12px #000">Membe</div>
<div class="a" style="left:39px;top:136px;width:8px;height:1px;background:repeating-linear-gradient(90deg,#a0a0a0 0 1px,transparent 1px 2px)"></div>
<svg class="a" style="left:47px;top:143px;" width="13" height="11" viewBox="0 0 13 11"><rect x="0.6" y="0.6" width="11.8" height="9.8" rx="1.2" fill="#fff" stroke="#000" stroke-width="1.2"/><rect x="2.2" y="2.2" width="2" height="1.5" fill="#2030e0"/><rect x="5.4" y="2.2" width="2" height="1.5" fill="#2030e0"/><rect x="8.6" y="2.2" width="2" height="1.5" fill="#2030e0"/><rect x="2.2" y="4.9" width="2" height="1.5" fill="#2030e0"/><rect x="5.4" y="4.9" width="2" height="1.5" fill="#a8a8a8"/><rect x="8.6" y="4.9" width="2" height="1.5" fill="#a8a8a8"/><rect x="2.2" y="7.5" width="2" height="1.5" fill="#2030e0"/><rect x="5.4" y="7.5" width="2" height="1.5" fill="#a8a8a8"/><rect x="8.6" y="7.5" width="2" height="1.5" fill="#a8a8a8"/></svg>
<div class="t m" style="left:64px;top:142px;font-size:8.8px;font-weight:400;color:#000;letter-spacing:0.85px;-webkit-text-stroke:0.12px #000">Membe</div>
<div class="a" style="left:39px;top:148px;width:8px;height:1px;background:repeating-linear-gradient(90deg,#a0a0a0 0 1px,transparent 1px 2px)"></div>
<svg class="a" style="left:47px;top:155px;" width="13" height="11" viewBox="0 0 13 11"><rect x="0.6" y="0.6" width="11.8" height="9.8" rx="1.2" fill="#fff" stroke="#000" stroke-width="1.2"/><rect x="2.2" y="2.2" width="2" height="1.5" fill="#2030e0"/><rect x="5.4" y="2.2" width="2" height="1.5" fill="#2030e0"/><rect x="8.6" y="2.2" width="2" height="1.5" fill="#2030e0"/><rect x="2.2" y="4.9" width="2" height="1.5" fill="#2030e0"/><rect x="5.4" y="4.9" width="2" height="1.5" fill="#a8a8a8"/><rect x="8.6" y="4.9" width="2" height="1.5" fill="#a8a8a8"/><rect x="2.2" y="7.5" width="2" height="1.5" fill="#2030e0"/><rect x="5.4" y="7.5" width="2" height="1.5" fill="#a8a8a8"/><rect x="8.6" y="7.5" width="2" height="1.5" fill="#a8a8a8"/></svg>
<div class="t m" style="left:64px;top:154px;font-size:8.8px;font-weight:400;color:#000;letter-spacing:0.85px;-webkit-text-stroke:0.12px #000">Membe</div>
<div class="a" style="left:39px;top:160px;width:8px;height:1px;background:repeating-linear-gradient(90deg,#a0a0a0 0 1px,transparent 1px 2px)"></div>
<svg class="a" style="left:47px;top:167px;" width="13" height="11" viewBox="0 0 13 11"><rect x="0.6" y="0.6" width="11.8" height="9.8" rx="1.2" fill="#fff" stroke="#000" stroke-width="1.2"/><rect x="2.2" y="2.2" width="2" height="1.5" fill="#2030e0"/><rect x="5.4" y="2.2" width="2" height="1.5" fill="#2030e0"/><rect x="8.6" y="2.2" width="2" height="1.5" fill="#2030e0"/><rect x="2.2" y="4.9" width="2" height="1.5" fill="#2030e0"/><rect x="5.4" y="4.9" width="2" height="1.5" fill="#a8a8a8"/><rect x="8.6" y="4.9" width="2" height="1.5" fill="#a8a8a8"/><rect x="2.2" y="7.5" width="2" height="1.5" fill="#2030e0"/><rect x="5.4" y="7.5" width="2" height="1.5" fill="#a8a8a8"/><rect x="8.6" y="7.5" width="2" height="1.5" fill="#a8a8a8"/></svg>
<div class="a" style="left:62px;top:166px;width:35px;height:13px;background:#1ea0e8;outline:1px dotted #f08040;outline-offset:-1px"></div>
<div class="t m" style="left:64px;top:166px;font-size:8.8px;font-weight:400;color:#fff;letter-spacing:0.85px;-webkit-text-stroke:0.1px #fff">Membe</div>
<div class="a" style="left:39px;top:172px;width:8px;height:1px;background:repeating-linear-gradient(90deg,#a0a0a0 0 1px,transparent 1px 2px)"></div>
<svg class="a" style="left:47px;top:179px;" width="13" height="11" viewBox="0 0 13 11"><rect x="0.6" y="0.6" width="11.8" height="9.8" rx="1.2" fill="#fff" stroke="#000" stroke-width="1.2"/><rect x="2.2" y="2.2" width="2" height="1.5" fill="#2030e0"/><rect x="5.4" y="2.2" width="2" height="1.5" fill="#2030e0"/><rect x="8.6" y="2.2" width="2" height="1.5" fill="#2030e0"/><rect x="2.2" y="4.9" width="2" height="1.5" fill="#2030e0"/><rect x="5.4" y="4.9" width="2" height="1.5" fill="#a8a8a8"/><rect x="8.6" y="4.9" width="2" height="1.5" fill="#a8a8a8"/><rect x="2.2" y="7.5" width="2" height="1.5" fill="#2030e0"/><rect x="5.4" y="7.5" width="2" height="1.5" fill="#a8a8a8"/><rect x="8.6" y="7.5" width="2" height="1.5" fill="#a8a8a8"/></svg>
<div class="t m" style="left:64px;top:178px;font-size:8.8px;font-weight:400;color:#000;letter-spacing:0.85px;-webkit-text-stroke:0.12px #000">Membe</div>
<div class="a" style="left:39px;top:184px;width:8px;height:1px;background:repeating-linear-gradient(90deg,#a0a0a0 0 1px,transparent 1px 2px)"></div>
<svg class="a" style="left:47px;top:191px;" width="13" height="11" viewBox="0 0 13 11"><rect x="0.6" y="0.6" width="11.8" height="9.8" rx="1.2" fill="#fff" stroke="#000" stroke-width="1.2"/><rect x="2.2" y="2.2" width="2" height="1.5" fill="#2030e0"/><rect x="5.4" y="2.2" width="2" height="1.5" fill="#2030e0"/><rect x="8.6" y="2.2" width="2" height="1.5" fill="#2030e0"/><rect x="2.2" y="4.9" width="2" height="1.5" fill="#2030e0"/><rect x="5.4" y="4.9" width="2" height="1.5" fill="#a8a8a8"/><rect x="8.6" y="4.9" width="2" height="1.5" fill="#a8a8a8"/><rect x="2.2" y="7.5" width="2" height="1.5" fill="#2030e0"/><rect x="5.4" y="7.5" width="2" height="1.5" fill="#a8a8a8"/><rect x="8.6" y="7.5" width="2" height="1.5" fill="#a8a8a8"/></svg>
<div class="t m" style="left:64px;top:190px;font-size:8.8px;font-weight:400;color:#000;letter-spacing:0.85px;-webkit-text-stroke:0.12px #000">Descrip</div>
<div class="a" style="left:39px;top:196px;width:8px;height:1px;background:repeating-linear-gradient(90deg,#a0a0a0 0 1px,transparent 1px 2px)"></div>
<svg class="a" style="left:47px;top:203px;" width="13" height="11" viewBox="0 0 13 11"><rect x="0.6" y="0.6" width="11.8" height="9.8" rx="1.2" fill="#fff" stroke="#000" stroke-width="1.2"/><rect x="2.2" y="2.2" width="2" height="1.5" fill="#2030e0"/><rect x="5.4" y="2.2" width="2" height="1.5" fill="#2030e0"/><rect x="8.6" y="2.2" width="2" height="1.5" fill="#2030e0"/><rect x="2.2" y="4.9" width="2" height="1.5" fill="#2030e0"/><rect x="5.4" y="4.9" width="2" height="1.5" fill="#a8a8a8"/><rect x="8.6" y="4.9" width="2" height="1.5" fill="#a8a8a8"/><rect x="2.2" y="7.5" width="2" height="1.5" fill="#2030e0"/><rect x="5.4" y="7.5" width="2" height="1.5" fill="#a8a8a8"/><rect x="8.6" y="7.5" width="2" height="1.5" fill="#a8a8a8"/></svg>
<div class="t m" style="left:64px;top:202px;font-size:8.8px;font-weight:400;color:#000;letter-spacing:0.85px;-webkit-text-stroke:0.12px #000">Descrip</div>
<div class="a" style="left:39px;top:208px;width:8px;height:1px;background:repeating-linear-gradient(90deg,#a0a0a0 0 1px,transparent 1px 2px)"></div>
<svg class="a" style="left:47px;top:215px;" width="13" height="11" viewBox="0 0 13 11"><rect x="0.6" y="0.6" width="11.8" height="9.8" rx="1.2" fill="#fff" stroke="#000" stroke-width="1.2"/><rect x="2.2" y="2.2" width="2" height="1.5" fill="#2030e0"/><rect x="5.4" y="2.2" width="2" height="1.5" fill="#2030e0"/><rect x="8.6" y="2.2" width="2" height="1.5" fill="#2030e0"/><rect x="2.2" y="4.9" width="2" height="1.5" fill="#2030e0"/><rect x="5.4" y="4.9" width="2" height="1.5" fill="#a8a8a8"/><rect x="8.6" y="4.9" width="2" height="1.5" fill="#a8a8a8"/><rect x="2.2" y="7.5" width="2" height="1.5" fill="#2030e0"/><rect x="5.4" y="7.5" width="2" height="1.5" fill="#a8a8a8"/><rect x="8.6" y="7.5" width="2" height="1.5" fill="#a8a8a8"/></svg>
<div class="t m" style="left:64px;top:214px;font-size:8.8px;font-weight:400;color:#000;letter-spacing:0.85px;-webkit-text-stroke:0.12px #000">Descrip</div>
<div class="a" style="left:39px;top:220px;width:8px;height:1px;background:repeating-linear-gradient(90deg,#a0a0a0 0 1px,transparent 1px 2px)"></div>
<div class="a" style="left:38px;top:117px;width:1px;height:105px;background:repeating-linear-gradient(180deg,#a0a0a0 0 1px,transparent 1px 2px)"></div>
<div class="a" style="left:7px;top:92px;width:1px;height:4px;background:#a0a0a0"></div>
<div class="a" style="left:23px;top:104px;width:1px;height:4px;background:#a0a0a0"></div>
<div class="a" style="left:97px;top:82px;width:3px;height:423px;background:#f1efe4"></div>
<div class="a" style="left:0px;top:509px;width:97px;height:12px;background:#fbfaf6"></div>
<div class="a" style="left:0px;top:509px;width:13px;height:12px;background:#fff;border:1px solid #dad6c8;box-sizing:border-box"></div>
<svg class="a" style="left:3px;top:511px;" width="6" height="8" viewBox="0 0 6 8"><path d="M5 1 L2 4 L5 7" stroke="#3060a0" stroke-width="1.6" fill="none"/></svg>
<div class="a" style="left:15px;top:509px;width:21px;height:12px;background:#f4f3ee;border:1px solid #dad6c8;box-sizing:border-box"></div>
<div class="a" style="left:23px;top:513px;width:1px;height:4px;background:#b0b0b0"></div>
<div class="a" style="left:25px;top:513px;width:1px;height:4px;background:#b0b0b0"></div>
<div class="a" style="left:27px;top:513px;width:1px;height:4px;background:#b0b0b0"></div>
<div class="a" style="left:83px;top:509px;width:13px;height:12px;background:#fff;border:1px solid #dad6c8;box-sizing:border-box"></div>
<svg class="a" style="left:86px;top:511px;" width="6" height="8" viewBox="0 0 6 8"><path d="M1 1 L4 4 L1 7" stroke="#3060a0" stroke-width="1.6" fill="none"/></svg>
<div class="a" style="left:99px;top:81px;width:741px;height:424px;border-top:1px solid #fff;border-right:1px solid #716f64;box-sizing:border-box"></div>
<div class="a" style="left:100px;top:85px;width:734px;height:418px;border-top:3px solid #716f64;border-left:2px solid #716f64;border-bottom:1px solid #fff;border-right:1px solid #fff;box-sizing:border-box"></div>
<div class="a" style="left:832px;top:87px;width:2px;height:6px;background:#716f64"></div>
<div class="a" style="left:833px;top:93px;width:5px;height:409px;background:#f8f6ee"></div>
<div class="a" style="left:0;top:0;width:819px;height:489px;overflow:hidden">
<div class="a" style="left:102px;top:88px;width:717px;height:401px;background:#7c7b7f"></div>
<div class="a" style="left:102px;top:88px;width:717px;height:74px;background:#fff"></div>
<div class="a" style="left:102px;top:88px;width:1px;height:401px;background:#000"></div>
<div class="a" style="left:153px;top:88px;width:1px;height:401px;background:#000"></div>
<div class="a" style="left:102px;top:149px;width:717px;height:1px;background:#000"></div>
<div class="a" style="left:154px;top:124px;width:665px;height:1px;background:#404040"></div>
<div class="a" style="left:154px;top:125px;width:69px;height:24px;background:#f3f0e6"></div>
<div class="a" style="left:223px;top:125px;width:1px;height:24px;background:#8a8a8a"></div>
<div class="a" style="left:223px;top:150px;width:1px;height:339px;background:#d0ccd0"></div>
<div class="a" style="left:224px;top:125px;width:63px;height:24px;background:#f3f0e6"></div>
<div class="a" style="left:287px;top:125px;width:1px;height:24px;background:#8a8a8a"></div>
<div class="a" style="left:287px;top:150px;width:1px;height:339px;background:#d0ccd0"></div>
<div class="a" style="left:288px;top:125px;width:59px;height:24px;background:#f3f0e6"></div>
<div class="a" style="left:347px;top:125px;width:1px;height:24px;background:#8a8a8a"></div>
<div class="a" style="left:347px;top:150px;width:1px;height:339px;background:#d0ccd0"></div>
<div class="a" style="left:348px;top:125px;width:67px;height:24px;background:#f3f0e6"></div>
<div class="a" style="left:415px;top:125px;width:1px;height:24px;background:#8a8a8a"></div>
<div class="a" style="left:415px;top:150px;width:1px;height:339px;background:#d0ccd0"></div>
<div class="a" style="left:416px;top:125px;width:98px;height:24px;background:#f3f0e6"></div>
<div class="a" style="left:514px;top:125px;width:1px;height:24px;background:#8a8a8a"></div>
<div class="a" style="left:514px;top:150px;width:1px;height:339px;background:#d0ccd0"></div>
<div class="a" style="left:515px;top:125px;width:51px;height:24px;background:#f3f0e6"></div>
<div class="a" style="left:566px;top:125px;width:1px;height:24px;background:#8a8a8a"></div>
<div class="a" style="left:566px;top:150px;width:1px;height:339px;background:#d0ccd0"></div>
<div class="a" style="left:567px;top:125px;width:51px;height:24px;background:#f3f0e6"></div>
<div class="a" style="left:618px;top:125px;width:1px;height:24px;background:#8a8a8a"></div>
<div class="a" style="left:618px;top:150px;width:1px;height:339px;background:#d0ccd0"></div>
<div class="a" style="left:619px;top:125px;width:52px;height:24px;background:#f3f0e6"></div>
<div class="a" style="left:671px;top:125px;width:1px;height:24px;background:#8a8a8a"></div>
<div class="a" style="left:671px;top:150px;width:1px;height:339px;background:#d0ccd0"></div>
<div class="a" style="left:672px;top:125px;width:51px;height:24px;background:#f3f0e6"></div>
<div class="a" style="left:723px;top:125px;width:1px;height:24px;background:#8a8a8a"></div>
<div class="a" style="left:723px;top:150px;width:1px;height:339px;background:#d0ccd0"></div>
<div class="a" style="left:724px;top:125px;width:52px;height:24px;background:#f3f0e6"></div>
<div class="a" style="left:776px;top:125px;width:1px;height:24px;background:#8a8a8a"></div>
<div class="a" style="left:776px;top:150px;width:1px;height:339px;background:#d0ccd0"></div>
<div class="a" style="left:777px;top:125px;width:42px;height:24px;background:#f3f0e6"></div>
<div class="a" style="left:819px;top:125px;width:1px;height:24px;background:#8a8a8a"></div>
<div class="a" style="left:819px;top:150px;width:1px;height:339px;background:#d0ccd0"></div>
<div class="a" style="left:103px;top:150px;width:716px;height:12px;background:#fff"></div>
<div class="a" style="left:103px;top:175px;width:716px;height:1px;background:#d2ced2"></div>
<div class="a" style="left:103px;top:188px;width:716px;height:1px;background:#d2ced2"></div>
<div class="a" style="left:103px;top:201px;width:716px;height:1px;background:#d2ced2"></div>
<div class="a" style="left:103px;top:214px;width:716px;height:1px;background:#d2ced2"></div>
<div class="a" style="left:103px;top:226px;width:716px;height:1px;background:#d2ced2"></div>
<div class="a" style="left:103px;top:239px;width:716px;height:1px;background:#d2ced2"></div>
<div class="a" style="left:103px;top:252px;width:716px;height:1px;background:#d2ced2"></div>
<div class="a" style="left:103px;top:265px;width:716px;height:1px;background:#d2ced2"></div>
<div class="a" style="left:103px;top:278px;width:716px;height:1px;background:#d2ced2"></div>
<div class="a" style="left:103px;top:291px;width:716px;height:1px;background:#d2ced2"></div>
<div class="a" style="left:103px;top:304px;width:716px;height:1px;background:#d2ced2"></div>
<div class="a" style="left:103px;top:317px;width:716px;height:1px;background:#d2ced2"></div>
<div class="a" style="left:103px;top:330px;width:716px;height:1px;background:#d2ced2"></div>
<div class="a" style="left:103px;top:343px;width:716px;height:1px;background:#d2ced2"></div>
<div class="a" style="left:103px;top:356px;width:716px;height:1px;background:#d2ced2"></div>
<div class="a" style="left:103px;top:369px;width:716px;height:1px;background:#d2ced2"></div>
<div class="a" style="left:103px;top:382px;width:716px;height:1px;background:#d2ced2"></div>
<div class="a" style="left:103px;top:395px;width:716px;height:1px;background:#d2ced2"></div>
<div class="a" style="left:103px;top:408px;width:716px;height:1px;background:#d2ced2"></div>
<div class="a" style="left:103px;top:420px;width:716px;height:1px;background:#d2ced2"></div>
<div class="a" style="left:103px;top:433px;width:716px;height:1px;background:#d2ced2"></div>
<div class="a" style="left:103px;top:446px;width:716px;height:1px;background:#d2ced2"></div>
<div class="a" style="left:103px;top:459px;width:716px;height:1px;background:#d2ced2"></div>
<div class="a" style="left:103px;top:472px;width:716px;height:1px;background:#d2ced2"></div>
<div class="a" style="left:103px;top:485px;width:716px;height:1px;background:#d2ced2"></div>
<div class="a" style="left:223px;top:150px;width:1px;height:12px;background:#c0c0c0"></div>
<div class="a" style="left:287px;top:150px;width:1px;height:12px;background:#c0c0c0"></div>
<div class="a" style="left:347px;top:150px;width:1px;height:12px;background:#c0c0c0"></div>
<div class="a" style="left:415px;top:150px;width:1px;height:12px;background:#c0c0c0"></div>
<div class="a" style="left:514px;top:150px;width:1px;height:12px;background:#c0c0c0"></div>
<div class="a" style="left:566px;top:150px;width:1px;height:12px;background:#c0c0c0"></div>
<div class="a" style="left:618px;top:150px;width:1px;height:12px;background:#c0c0c0"></div>
<div class="a" style="left:671px;top:150px;width:1px;height:12px;background:#c0c0c0"></div>
<div class="a" style="left:723px;top:150px;width:1px;height:12px;background:#c0c0c0"></div>
<div class="a" style="left:776px;top:150px;width:1px;height:12px;background:#c0c0c0"></div>
<div class="a" style="left:153px;top:150px;width:1px;height:339px;background:#000"></div>
<div class="t" style="left:156px;top:88px;font-size:10.5px">Members of Cluster Number 3 (кластерный)</div>
<div class="t" style="left:156px;top:100px;font-size:10.5px">and Distances from Respective Cluster Center</div>
<div class="t" style="left:156px;top:112px;font-size:10.5px">Cluster contains 5 cases</div>
<div class="t" style="left:154px;top:126px;width:69px;text-align:center;font-size:10.5px">Полтавська</div>
<div class="t" style="left:224px;top:126px;width:63px;text-align:center;font-size:10.5px">Київська</div>
<div class="t" style="left:288px;top:126px;width:59px;text-align:center;font-size:10.5px">Вінницька</div>
<div class="t" style="left:348px;top:126px;width:67px;text-align:center;font-size:10.5px">Запорізька</div>
<div class="t" style="left:416px;top:126px;width:98px;text-align:center;font-size:10.5px"><b>м. Севастополь</b></div>
<div class="t" style="left:515px;top:126px;width:51px;text-align:center;font-size:10.5px;line-height:12px">Case No.<br>C&nbsp; 10</div>
<div class="t" style="left:567px;top:126px;width:51px;text-align:center;font-size:10.5px;line-height:12px">Case No.<br>C&nbsp; 11</div>
<div class="t" style="left:619px;top:126px;width:52px;text-align:center;font-size:10.5px;line-height:12px">Case No.<br>C&nbsp; 14</div>
<div class="t" style="left:672px;top:126px;width:51px;text-align:center;font-size:10.5px;line-height:12px">Case No.<br>C&nbsp; 16</div>
<div class="t" style="left:724px;top:126px;width:52px;text-align:center;font-size:10.5px;line-height:12px">Case No.<br>C&nbsp; 17</div>
<div class="t" style="left:777px;top:126px;width:52px;text-align:center;font-size:10.5px;line-height:12px">Case No.<br>C&nbsp; 18</div>
<div class="t" style="left:154px;top:150px;width:67px;text-align:right;font-size:10.5px">61556,83</div>
<div class="t" style="left:224px;top:150px;width:61px;text-align:right;font-size:10.5px">22540,41</div>
<div class="t" style="left:288px;top:150px;width:57px;text-align:right;font-size:10.5px">12963,93</div>
<div class="t" style="left:348px;top:150px;width:65px;text-align:right;font-size:10.5px">5564,368</div>
<div class="t" style="left:416px;top:150px;width:96px;text-align:right;font-size:10.5px">24274,02</div>
<div class="t" style="left:515px;top:150px;width:49px;text-align:right;font-size:10.5px">70951,95</div>
<div class="t" style="left:567px;top:150px;width:49px;text-align:right;font-size:10.5px">24292,01</div>
<div class="t" style="left:619px;top:150px;width:50px;text-align:right;font-size:10.5px">599,8179</div>
<div class="t" style="left:672px;top:150px;width:49px;text-align:right;font-size:10.5px">41285,80</div>
<div class="t" style="left:724px;top:150px;width:50px;text-align:right;font-size:10.5px">6736,420</div>
<div class="t" style="left:777px;top:150px;width:45px;text-align:right;font-size:10.5px">2405,15</div>
<div class="t m" style="left:105px;top:150px;font-size:10.5px;font-weight:700;color:#000;">Distance</div>
<div class="a" style="left:415px;top:149px;width:100px;height:13px;border:2px solid #000;box-sizing:border-box"></div>
<div class="a" style="left:513px;top:159px;width:3px;height:4px;background:#000"></div>
</div>
<div class="a" style="left:819px;top:87px;width:14px;height:402px;background:#f6f4ec"></div>
<div class="a" style="left:819px;top:92px;width:14px;height:1px;background:#000"></div>
<div class="a" style="left:819px;top:93px;width:14px;height:13px;background:#f1efe4;border-right:1px solid #716f64;border-bottom:1px solid #716f64;border-left:1px solid #fff;border-top:1px solid #fff;box-sizing:border-box"></div>
<svg class="a" style="left:823px;top:97px;" width="6" height="3" viewBox="0 0 6 3"><path d="M0 3 L3 0 L6 3 Z" fill="#a8a494"/></svg>
<div class="a" style="left:819px;top:476px;width:14px;height:13px;background:#f1efe4;border-right:1px solid #716f64;border-bottom:1px solid #716f64;border-left:1px solid #fff;border-top:1px solid #fff;box-sizing:border-box"></div>
<svg class="a" style="left:823px;top:481px;" width="6" height="3" viewBox="0 0 6 3"><path d="M0 0 L3 3 L6 0 Z" fill="#a8a494"/></svg>
<div class="a" style="left:102px;top:489px;width:717px;height:13px;background:#f6f4ec"></div>
<div class="a" style="left:102px;top:489px;width:6px;height:13px;background:#fff;border-right:1px solid #000;border-bottom:1px solid #000;box-sizing:border-box"></div>
<div class="a" style="left:109px;top:489px;width:13px;height:13px;background:#f1efe4;border-right:1px solid #716f64;border-bottom:1px solid #716f64;border-left:1px solid #fff;border-top:1px solid #fff;box-sizing:border-box"></div>
<svg class="a" style="left:113px;top:492px;" width="4" height="7" viewBox="0 0 4 7"><path d="M4 0 L0 3.5 L4 7 Z" fill="#000"/></svg>
<div class="a" style="left:122px;top:489px;width:443px;height:13px;background:#f1efe4;border-right:1px solid #716f64;border-bottom:1px solid #716f64;border-left:1px solid #fff;border-top:1px solid #fff;box-sizing:border-box"></div>
<div class="a" style="left:806px;top:489px;width:13px;height:13px;background:#f1efe4;border-right:1px solid #716f64;border-bottom:1px solid #716f64;border-left:1px solid #fff;border-top:1px solid #fff;box-sizing:border-box"></div>
<svg class="a" style="left:811px;top:492px;" width="4" height="7" viewBox="0 0 4 7"><path d="M0 0 L4 3.5 L0 7 Z" fill="#000"/></svg>
<div class="a" style="left:819px;top:489px;width:13px;height:13px;background:#f1efe4"></div>
<div class="a" style="left:97px;top:505px;width:743px;height:1px;background:#8a8678"></div>
<div class="a" style="left:99px;top:506px;width:197px;height:15px;background:#f1efe4;border-left:1px solid #fff;border-right:1px solid #716f64;border-bottom:1px solid #716f64;box-sizing:border-box"></div>
<svg class="a" style="left:103px;top:508px;" width="13" height="12" viewBox="0 0 13 12"><rect x="0.6" y="0.6" width="11.8" height="10.8" rx="1.2" fill="#fff" stroke="#000" stroke-width="1.2"/><rect x="2.2" y="2.2" width="2" height="1.5" fill="#2030e0"/><rect x="5.4" y="2.2" width="2" height="1.5" fill="#2030e0"/><rect x="8.6" y="2.2" width="2" height="1.5" fill="#2030e0"/><rect x="2.2" y="5.2" width="2" height="1.5" fill="#2030e0"/><rect x="5.4" y="5.2" width="2" height="1.5" fill="#a8a8a8"/><rect x="8.6" y="5.2" width="2" height="1.5" fill="#a8a8a8"/><rect x="2.2" y="8.2" width="2" height="1.5" fill="#2030e0"/><rect x="5.4" y="8.2" width="2" height="1.5" fill="#a8a8a8"/><rect x="8.6" y="8.2" width="2" height="1.5" fill="#a8a8a8"/></svg>
<div class="a" style="left:121px;top:507px;width:173px;height:13px;overflow:hidden"><div class="t" style="left:0;top:0;font-size:8.6px;letter-spacing:0.08px;color:#111">Members of Cluster Number 3 (кластерный)</div></div>
<div class="a" style="left:298px;top:506px;width:197px;height:15px;background:#f1efe4;border-left:1px solid #fff;border-right:1px solid #716f64;border-bottom:1px solid #716f64;box-sizing:border-box"></div>
<svg class="a" style="left:302px;top:508px;" width="13" height="12" viewBox="0 0 13 12"><rect x="0.6" y="0.6" width="11.8" height="10.8" rx="1.2" fill="#fff" stroke="#000" stroke-width="1.2"/><rect x="2.2" y="2.2" width="2" height="1.5" fill="#2030e0"/><rect x="5.4" y="2.2" width="2" height="1.5" fill="#2030e0"/><rect x="8.6" y="2.2" width="2" height="1.5" fill="#2030e0"/><rect x="2.2" y="5.2" width="2" height="1.5" fill="#2030e0"/><rect x="5.4" y="5.2" width="2" height="1.5" fill="#a8a8a8"/><rect x="8.6" y="5.2" width="2" height="1.5" fill="#a8a8a8"/><rect x="2.2" y="8.2" width="2" height="1.5" fill="#2030e0"/><rect x="5.4" y="8.2" width="2" height="1.5" fill="#a8a8a8"/><rect x="8.6" y="8.2" width="2" height="1.5" fill="#a8a8a8"/></svg>
<div class="a" style="left:320px;top:507px;width:173px;height:13px;overflow:hidden"><div class="t" style="left:0;top:0;font-size:8.6px;letter-spacing:0.08px;color:#111">Members of Cluster Number 1 (кластерный)</div></div>
<div class="a" style="left:496px;top:504px;width:199px;height:18px;background:#f1efe4;border-left:1px solid #fff;border-right:1px solid #716f64;border-bottom:1px solid #716f64;box-sizing:border-box"></div>
<svg class="a" style="left:501px;top:509px;" width="13" height="12" viewBox="0 0 13 12"><rect x="0.6" y="0.6" width="11.8" height="10.8" rx="1.2" fill="#fff" stroke="#000" stroke-width="1.2"/><rect x="2.2" y="2.2" width="2" height="1.5" fill="#2030e0"/><rect x="5.4" y="2.2" width="2" height="1.5" fill="#2030e0"/><rect x="8.6" y="2.2" width="2" height="1.5" fill="#2030e0"/><rect x="2.2" y="5.2" width="2" height="1.5" fill="#2030e0"/><rect x="5.4" y="5.2" width="2" height="1.5" fill="#a8a8a8"/><rect x="8.6" y="5.2" width="2" height="1.5" fill="#a8a8a8"/><rect x="2.2" y="8.2" width="2" height="1.5" fill="#2030e0"/><rect x="5.4" y="8.2" width="2" height="1.5" fill="#a8a8a8"/><rect x="8.6" y="8.2" width="2" height="1.5" fill="#a8a8a8"/></svg>
<div class="a" style="left:519px;top:509px;width:175px;height:14px;overflow:hidden"><div class="t" style="left:0;top:0;font-size:8.6px;letter-spacing:0.08px;color:#111">Members of Cluster Number 2 (кластерный)</div></div>
<div class="a" style="left:697px;top:506px;width:143px;height:15px;background:#f1efe4;border-left:1px solid #fff;border-right:1px solid #716f64;border-bottom:1px solid #716f64;box-sizing:border-box"></div>
<svg class="a" style="left:701px;top:508px;" width="13" height="12" viewBox="0 0 13 12"><rect x="0.6" y="0.6" width="11.8" height="10.8" rx="1.2" fill="#fff" stroke="#000" stroke-width="1.2"/><rect x="2.2" y="2.2" width="2" height="1.5" fill="#2030e0"/><rect x="5.4" y="2.2" width="2" height="1.5" fill="#2030e0"/><rect x="8.6" y="2.2" width="2" height="1.5" fill="#2030e0"/><rect x="2.2" y="5.2" width="2" height="1.5" fill="#2030e0"/><rect x="5.4" y="5.2" width="2" height="1.5" fill="#a8a8a8"/><rect x="8.6" y="5.2" width="2" height="1.5" fill="#a8a8a8"/><rect x="2.2" y="8.2" width="2" height="1.5" fill="#2030e0"/><rect x="5.4" y="8.2" width="2" height="1.5" fill="#a8a8a8"/><rect x="8.6" y="8.2" width="2" height="1.5" fill="#a8a8a8"/></svg>
<div class="a" style="left:719px;top:507px;width:119px;height:13px;overflow:hidden"><div class="t" style="left:0;top:0;font-size:8.6px;letter-spacing:0.08px;color:#111">Members of Cluster Number 4 (кластерный)</div></div>
<div class="a" style="left:812px;top:506px;width:14px;height:15px;background:#f1efe4;border-left:1px solid #fff;border-right:1px solid #716f64;border-bottom:1px solid #716f64;box-sizing:border-box"></div>
<svg class="a" style="left:816px;top:510px;" width="4" height="7" viewBox="0 0 4 7"><path d="M4 0 L0 3.5 L4 7 Z" fill="#000"/></svg>
<div class="a" style="left:826px;top:506px;width:14px;height:15px;background:#f1efe4;border-left:1px solid #fff;border-right:1px solid #716f64;border-bottom:1px solid #716f64;box-sizing:border-box"></div>
<svg class="a" style="left:831px;top:510px;" width="4" height="7" viewBox="0 0 4 7"><path d="M0 0 L4 3.5 L0 7 Z" fill="#000"/></svg>
<div class="a" style="left:3px;top:524px;width:17px;height:21px;border-top:1px solid #fff;border-left:1px solid #fff;border-right:2px solid #9c9888;border-bottom:2px solid #9c9888;box-sizing:border-box"></div>
<div class="a" style="left:4px;top:526px;width:14px;height:13px;background:#fff;border:1px solid #000;box-sizing:border-box"></div>
<svg class="a" style="left:4px;top:526px;" width="14" height="13" viewBox="0 0 14 13"><path d="M2 10 L5 3 L8 9 L10 6 L12 10" stroke="#000" fill="none"/></svg>
<div class="a" style="left:23px;top:524px;width:131px;height:21px;border-top:1px solid #fff;border-left:1px solid #fff;border-right:2px solid #9c9888;border-bottom:2px solid #9c9888;box-sizing:border-box"></div>
<svg class="a" style="left:26px;top:528px;" width="14" height="14" viewBox="0 0 14 14"><rect x="0" y="1" width="11" height="11" fill="#fff"/><path d="M0 1.5 H11 V6.5 H13 M0 4.5 H8 V8.5 H11 V6.5 M0 7.5 H4.5 V10.5 H8 V8.5 M0 10 H2.5 V12.5 H4.5 V10.5 M0 12.5 H2.5" stroke="#1010e0" stroke-width="1.3" fill="none"/></svg>
<div class="t m" style="left:41px;top:529px;font-size:9.2px;font-weight:700;color:#000;letter-spacing:0.35px">k - Means Clustering ...</div>
<div class="a" style="left:0px;top:545px;width:840px;height:1px;background:#d8d4c4"></div>
<div class="t m" style="left:2px;top:549px;font-size:9.2px;font-weight:400;color:#000;letter-spacing:-0.2px">For Help, press F1</div>
<div class="a" style="left:508px;top:548px;width:53px;height:13px;border-top:1px solid #c4c0b0;border-left:1px solid #c4c0b0;border-bottom:1px solid #fff;border-right:1px solid #fff;box-sizing:border-box"></div>
<div class="a" style="left:561px;top:548px;width:92px;height:13px;border-top:1px solid #c4c0b0;border-left:1px solid #c4c0b0;border-bottom:1px solid #fff;border-right:1px solid #fff;box-sizing:border-box"></div>
<div class="a" style="left:653px;top:548px;width:41px;height:13px;border-top:1px solid #c4c0b0;border-left:1px solid #c4c0b0;border-bottom:1px solid #fff;border-right:1px solid #fff;box-sizing:border-box"></div>
<div class="a" style="left:694px;top:548px;width:56px;height:13px;border-top:1px solid #c4c0b0;border-left:1px solid #c4c0b0;border-bottom:1px solid #fff;border-right:1px solid #fff;box-sizing:border-box"></div>
<div class="a" style="left:750px;top:548px;width:33px;height:13px;border-top:1px solid #c4c0b0;border-left:1px solid #c4c0b0;border-bottom:1px solid #fff;border-right:1px solid #fff;box-sizing:border-box"></div>
<div class="a" style="left:783px;top:548px;width:30px;height:13px;border-top:1px solid #c4c0b0;border-left:1px solid #c4c0b0;border-bottom:1px solid #fff;border-right:1px solid #fff;box-sizing:border-box"></div>
<div class="a" style="left:813px;top:548px;width:27px;height:13px;border-top:1px solid #c4c0b0;border-left:1px solid #c4c0b0;border-bottom:1px solid #fff;border-right:1px solid #fff;box-sizing:border-box"></div>
<div class="t" style="left:508px;top:548px;width:53px;text-align:center;font-size:9.5px;letter-spacing:-0.2px">C1,V5</div>
<div class="t" style="left:561px;top:548px;width:89px;text-align:right;font-size:9.5px;letter-spacing:-0.2px">24274,02</div>
<div class="t m" style="left:755px;top:548px;font-size:9.5px;font-weight:400;color:#b0ac9c;">CAPS</div>
<div class="t m" style="left:787px;top:548px;font-size:9.5px;font-weight:400;color:#000;">NUM</div>
<div class="t m" style="left:818px;top:548px;font-size:9.5px;font-weight:400;color:#b0ac9c;">REC</div>
<div class="a" style="left:0px;top:561px;width:840px;height:1px;background:#404040"></div>
<div class="a" style="left:0px;top:562px;width:840px;height:2px;background:#7c7c7c"></div>
<div class="a" style="left:12px;top:561px;width:19px;height:6px;background:radial-gradient(ellipse at 50% 80%,#e0f8ff,#40a8d8);border:1px solid #102040;border-radius:10px 10px 0 0;box-sizing:border-box"></div>
</body></html>
